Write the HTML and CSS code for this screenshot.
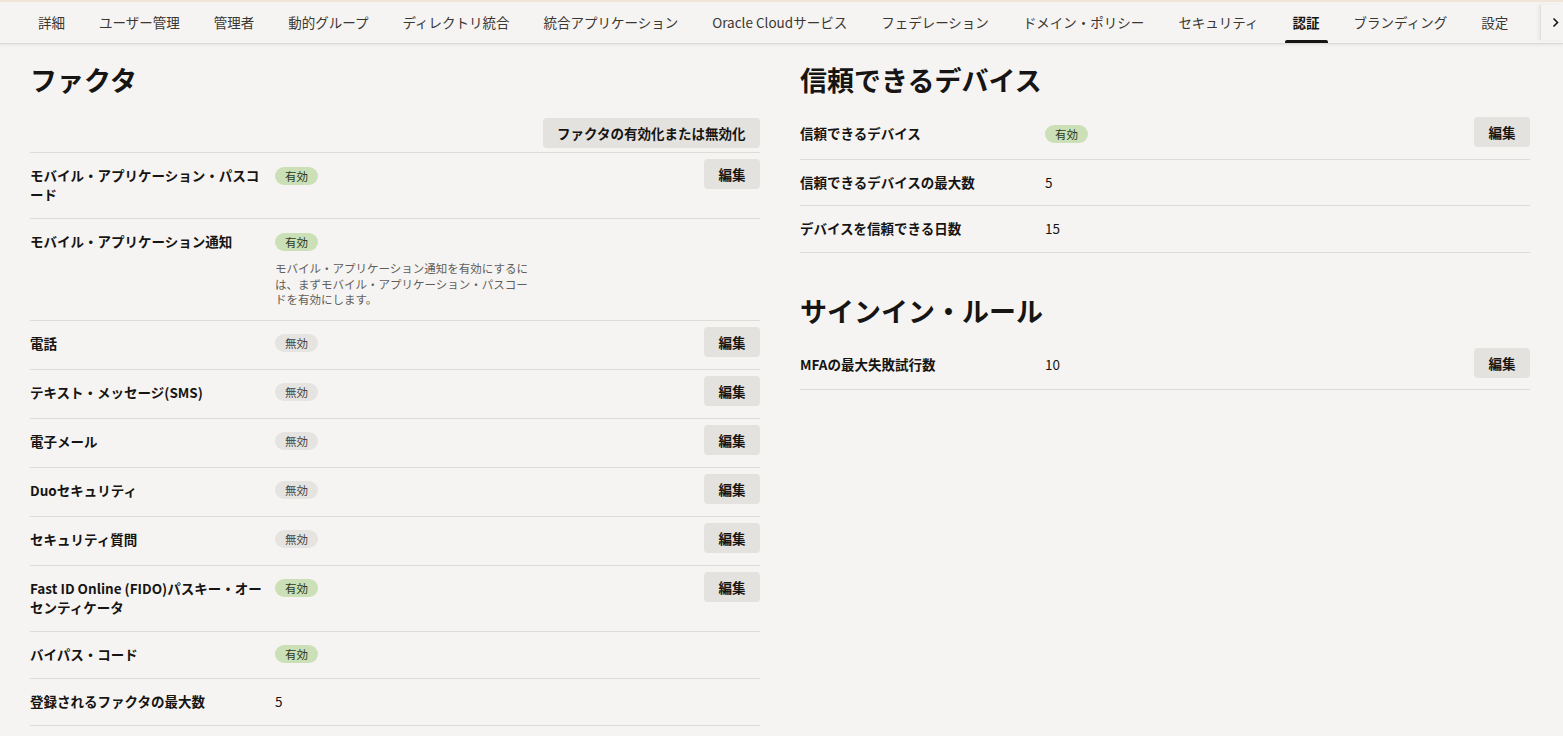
FILE: index.html
```html
<!DOCTYPE html>
<html lang="ja">
<head>
  <meta charset="UTF-8" />
  <meta name="viewport" content="width=device-width, initial-scale=1" />
  <title>認証</title>
  <link rel="stylesheet" href="styles.css">
</head>
<body>
  <nav class="tabs">
    <div class="tab-list">
      <a class="tab">詳細</a>
      <a class="tab">ユーザー管理</a>
      <a class="tab">管理者</a>
      <a class="tab">動的グループ</a>
      <a class="tab">ディレクトリ統合</a>
      <a class="tab">統合アプリケーション</a>
      <a class="tab">Oracle Cloudサービス</a>
      <a class="tab">フェデレーション</a>
      <a class="tab">ドメイン・ポリシー</a>
      <a class="tab">セキュリティ</a>
      <a class="tab active">認証</a>
      <a class="tab">ブランディング</a>
      <a class="tab">設定</a>
    </div>
    <button class="tab-more" aria-label="次へ">
      <svg width="7" height="11" viewBox="0 0 7 11"><path d="M1.5 1.5l4 4-4 4" fill="none" stroke="#161513" stroke-width="1.6"/></svg>
    </button>
  </nav>

  <main class="page">
    <section class="col">
      <h2 class="section-title">ファクタ</h2>
      <div class="toolbar">
        <button class="btn">ファクタの有効化または無効化</button>
      </div>
      <div class="rows top-rule">
        <div class="row">
          <div class="label">モバイル・アプリケーション・パスコード</div>
          <div class="value"><span class="badge on">有効</span></div>
          <div class="action"><button class="btn">編集</button></div>
        </div>
        <div class="row">
          <div class="label">モバイル・アプリケーション通知</div>
          <div class="value">
            <span class="badge on">有効</span>
            <p class="hint">モバイル・アプリケーション通知を有効にするには、まずモバイル・アプリケーション・パスコー<br>ドを有効にします。</p>
          </div>
          <div class="action"></div>
        </div>
        <div class="row">
          <div class="label">電話</div>
          <div class="value"><span class="badge off">無効</span></div>
          <div class="action"><button class="btn">編集</button></div>
        </div>
        <div class="row">
          <div class="label">テキスト・メッセージ(SMS)</div>
          <div class="value"><span class="badge off">無効</span></div>
          <div class="action"><button class="btn">編集</button></div>
        </div>
        <div class="row">
          <div class="label">電子メール</div>
          <div class="value"><span class="badge off">無効</span></div>
          <div class="action"><button class="btn">編集</button></div>
        </div>
        <div class="row">
          <div class="label">Duoセキュリティ</div>
          <div class="value"><span class="badge off">無効</span></div>
          <div class="action"><button class="btn">編集</button></div>
        </div>
        <div class="row">
          <div class="label">セキュリティ質問</div>
          <div class="value"><span class="badge off">無効</span></div>
          <div class="action"><button class="btn">編集</button></div>
        </div>
        <div class="row">
          <div class="label">Fast ID Online (FIDO)パスキー・オーセンティケータ</div>
          <div class="value"><span class="badge on">有効</span></div>
          <div class="action"><button class="btn">編集</button></div>
        </div>
        <div class="row">
          <div class="label">バイパス・コード</div>
          <div class="value"><span class="badge on">有効</span></div>
          <div class="action"></div>
        </div>
        <div class="row">
          <div class="label">登録されるファクタの最大数</div>
          <div class="value">5</div>
          <div class="action"></div>
        </div>
      </div>
    </section>

    <section class="col">
      <h2 class="section-title compact">信頼できるデバイス</h2>
      <div class="rows tight">
        <div class="row">
          <div class="label">信頼できるデバイス</div>
          <div class="value"><span class="badge on">有効</span></div>
          <div class="action"><button class="btn">編集</button></div>
        </div>
        <div class="row">
          <div class="label">信頼できるデバイスの最大数</div>
          <div class="value">5</div>
          <div class="action"></div>
        </div>
        <div class="row">
          <div class="label">デバイスを信頼できる日数</div>
          <div class="value">15</div>
          <div class="action"></div>
        </div>
      </div>

      <h2 class="section-title compact spaced">サインイン・ルール</h2>
      <div class="rows tight">
        <div class="row">
          <div class="label">MFAの最大失敗試行数</div>
          <div class="value">10</div>
          <div class="action"><button class="btn">編集</button></div>
        </div>
      </div>
    </section>
  </main>
</body>
</html>
```

FILE: styles.css
```css
* {
  box-sizing: border-box;
}

html, body {
  margin: 0;
  padding: 0;
  background: #f5f4f2;
  color: #161513;
  font-family: "Noto Sans CJK JP", "Noto Sans", sans-serif;
  overflow: hidden;
}

/* tab bar */
.tabs {
  display: flex;
  height: 44px;
  border-top: 2px solid #f0e6d8;
  border-bottom: 1px solid #dddad6;
  box-shadow: 0 1px 3px rgba(0, 0, 0, 0.07);
  background: #f5f4f2;
  overflow: hidden;
}

.tab-list {
  flex: 1;
  display: flex;
  padding-left: 21px;
  overflow: hidden;
}

.tab {
  position: relative;
  padding: 0 17px;
  line-height: 41px;
  font-size: 13.5px;
  color: #3a3733;
  white-space: nowrap;
  cursor: pointer;
}

.tab.active {
  font-weight: 700;
  color: #161513;
}

.tab.active::after {
  content: "";
  position: absolute;
  left: 9px;
  right: 9px;
  bottom: 0;
  height: 3px;
  border-radius: 2px 2px 0 0;
  background: #161513;
}

.tab-more {
  flex: 0 0 23px;
  display: flex;
  align-items: center;
  padding: 0 0 0 11px;
  margin: 3px 0;
  border: none;
  border-left: 1px solid #e2dfdb;
  box-shadow: -2px 0 3px rgba(0, 0, 0, 0.05);
  background: #f5f4f2;
  cursor: pointer;
}

/* content */
.page {
  display: grid;
  grid-template-columns: 730px 730px;
  column-gap: 40px;
  padding: 0 30px;
}

.section-title {
  margin: 19px 0 21px;
  font-size: 27px;
  line-height: 34px;
  font-weight: 700;
}

.section-title.compact {
  margin-bottom: 14px;
}

.section-title.spaced {
  margin-top: 41px;
}

.toolbar {
  display: flex;
  justify-content: flex-end;
  margin-bottom: 4px;
}

.btn {
  height: 30px;
  padding: 0 14.5px;
  border: none;
  border-radius: 4px;
  background: #e4e2df;
  color: #161513;
  font-family: inherit;
  font-size: 13.5px;
  font-weight: 700;
  cursor: pointer;
}

.btn:hover {
  background: #dad7d3;
}

.rows.top-rule {
  border-top: 1px solid #dfdcd8;
}

.row {
  display: grid;
  grid-template-columns: 235px 1fr auto;
  column-gap: 10px;
  align-items: start;
  padding: 6px 0 12px;
  border-bottom: 1px solid #dfdcd8;
}

.rows.tight .row {
  padding-bottom: 11.5px;
}

.label {
  padding: 7px 0 2px;
  font-size: 13.5px;
  line-height: 19px;
  font-weight: 700;
}

.value {
  display: flex;
  flex-direction: column;
  align-items: flex-start;
  padding-top: 7px;
  font-size: 13.5px;
  line-height: 19px;
}

.badge {
  display: inline-block;
  height: 18px;
  margin-top: 0.5px;
  padding: 0 10px;
  border-radius: 9px;
  font-size: 11.5px;
  line-height: 18px;
}

.badge.on {
  background: #cce0b8;
  color: #2b3a21;
}

.badge.off {
  background: #e6e4e1;
  color: #47443f;
}

.hint {
  max-width: 256px;
  margin: 10.5px 0 0;
  font-size: 11.5px;
  line-height: 15.5px;
  color: #625f5b;
}

.action {
  display: flex;
  justify-content: flex-end;
}
```
